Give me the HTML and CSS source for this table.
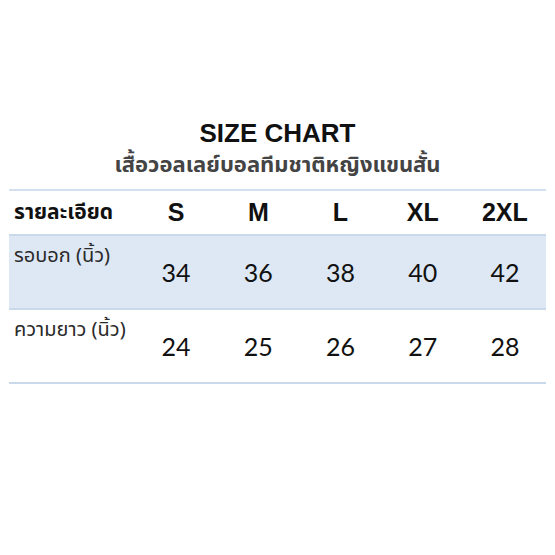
FILE: index.html
```html
<!DOCTYPE html>
<html lang="th">
<head>
<meta charset="utf-8">
<title>Size Chart</title>
<link rel="stylesheet" href="styles.css">
</head>
<body>
<div class="page">
  <h1 class="title">SIZE CHART</h1>
  <p class="subtitle">เสื้อวอลเลย์บอลทีมชาติหญิงแขนสั้น</p>
  <div class="chart">
    <div class="row head">
      <div class="label">รายละเอียด</div>
      <div class="cell">S</div>
      <div class="cell">M</div>
      <div class="cell">L</div>
      <div class="cell">XL</div>
      <div class="cell">2XL</div>
    </div>
    <div class="row shaded">
      <div class="label">รอบอก (นิ้ว)</div>
      <div class="cell">34</div>
      <div class="cell">36</div>
      <div class="cell">38</div>
      <div class="cell">40</div>
      <div class="cell">42</div>
    </div>
    <div class="row">
      <div class="label">ความยาว (นิ้ว)</div>
      <div class="cell">24</div>
      <div class="cell">25</div>
      <div class="cell">26</div>
      <div class="cell">27</div>
      <div class="cell">28</div>
    </div>
  </div>
</div>
</body>
</html>
```
FILE: styles.css
```css
html, body {
  margin: 0;
  padding: 0;
  background: #ffffff;
}
.page {
  width: 555px;
  height: 555px;
  padding-top: 118px;
  box-sizing: border-box;
  font-family: "Liberation Sans", Arial, sans-serif;
}
.title {
  margin: 0;
  text-align: center;
  font-size: 26px;
  line-height: 30px;
  font-weight: bold;
  color: #111111;
}
.subtitle {
  margin: 0;
  text-align: center;
  font-family: "Noto Sans Thai", Tahoma, "Noto Sans", "DejaVu Sans", sans-serif;
  font-size: 22px;
  line-height: 35px;
  font-weight: bold;
  color: #444444;
}
.chart {
  margin: 6px 9px 0 9px;
  border-top: 2px solid #d3e0ee;
}
.row {
  display: grid;
  grid-template-columns: 126px repeat(5, 1fr);
  height: 74px;
  border-bottom: 2px solid #c9d9ea;
  box-sizing: border-box;
}
.row.head {
  height: 45px;
}
.row.shaded {
  background: #dde8f4;
}
.label {
  padding: 5px 0 0 5px;
  font-family: "Noto Sans Thai", Tahoma, "Noto Sans", "DejaVu Sans", sans-serif;
  font-size: 20px;
  color: #2a2a2a;
  white-space: nowrap;
}
.cell {
  display: flex;
  align-items: center;
  justify-content: center;
  font-family: Lato, "Open Sans", sans-serif;
  font-size: 25px;
  color: #111111;
}
.head .label {
  display: flex;
  align-items: center;
  padding-top: 0;
  font-weight: bold;
  font-size: 21px;
  color: #111111;
}
.head .cell {
  font-family: "Liberation Sans", Arial, sans-serif;
  font-weight: bold;
  font-size: 25px;
}
```
